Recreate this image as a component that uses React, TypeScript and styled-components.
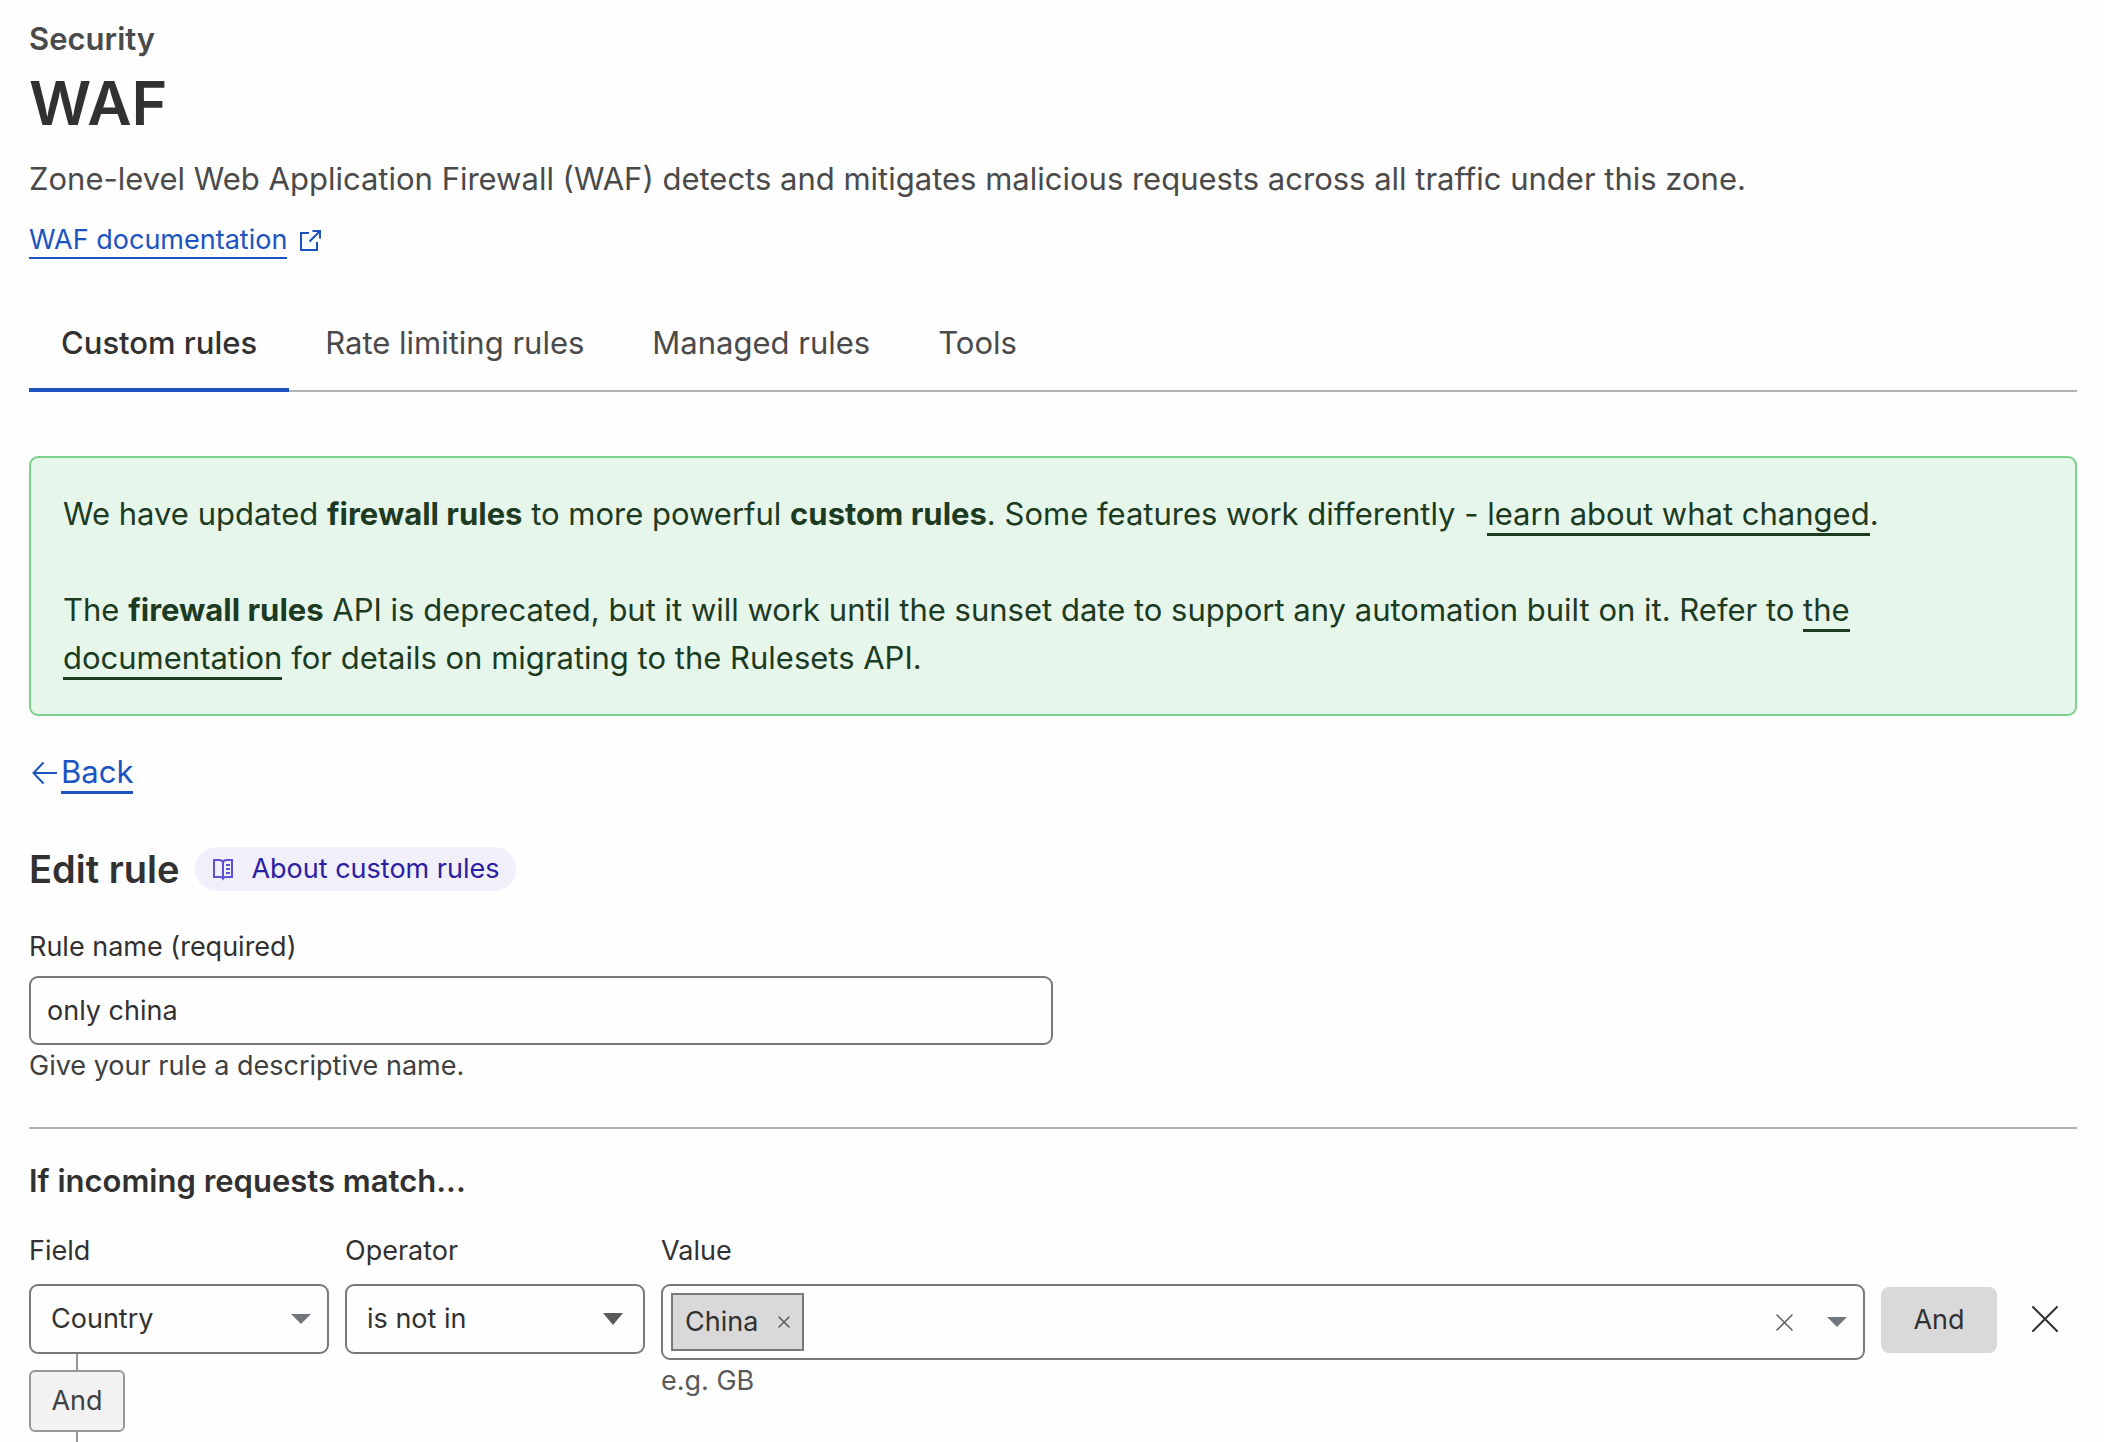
import { useState } from "react";
import styled, { createGlobalStyle, css } from "styled-components";

const color = {
  text: "#313131",
  muted: "#4a4a4a",
  faint: "#595959",
  link: "#1b53c0",
  border: "#797979",
  rule: "#b3b3b3",
  successText: "#1d3a22",
};

const GlobalStyle = createGlobalStyle`
  *, *::before, *::after { box-sizing: border-box; }
  body {
    margin: 0;
    background: #fefefe;
    color: ${color.text};
    font-family: Inter, "Liberation Sans", sans-serif;
    font-size: 27px;
    line-height: 42px;
  }
  h1, h2, h3, p { margin: 0; font-weight: 400; }
  button, input, select { font: inherit; color: inherit; }
`;

const Page = styled.main`
  padding: 15px 27px 0 29px;
`;

const Eyebrow = styled.p`
  font-size: 31px;
  line-height: 48px;
  font-weight: 600;
  color: ${color.muted};
`;

const Title = styled.h1`
  font-size: 61px;
  line-height: 80px;
  font-weight: 600;
`;

const Lead = styled.p`
  margin-top: 12px;
  font-size: 31px;
  line-height: 48px;
  color: ${color.muted};
`;

const DocLine = styled.p`
  margin-top: 16px;
  display: flex;
  align-items: center;
  gap: 12px;
  color: ${color.link};
`;

const Link = styled.a<{ $thick?: boolean }>`
  color: inherit;
  text-decoration: none;
  padding-bottom: 1px;
  border-bottom: ${(p) => (p.$thick ? 3 : 2)}px solid currentColor;
`;

const Tabs = styled.nav`
  margin-top: 34px;
  display: flex;
  gap: 4px;
  box-shadow: inset 0 -2px 0 ${color.rule};
`;

const Tab = styled.a<{ $active?: boolean }>`
  padding: 24px 32px 21px;
  font-size: 31px;
  line-height: 48px;
  text-decoration: none;
  color: ${color.muted};
  border-bottom: 4px solid transparent;
  ${(p) =>
    p.$active &&
    css`
      color: ${color.text};
      font-weight: 500;
      border-bottom-color: ${color.link};
    `}
`;

const Notice = styled.section`
  margin-top: 64px;
  padding: 32px;
  display: grid;
  gap: 48px;
  border: 2px solid #7bd08e;
  border-radius: 9px;
  background: #e6f6ea;
  color: ${color.successText};
  font-size: 31px;
  line-height: 48px;

  strong { font-weight: 700; }
`;

const BackLine = styled.p`
  margin-top: 32px;
  display: flex;
  align-items: center;
  color: ${color.link};
  font-size: 31px;
  line-height: 48px;
`;

const HeadingRow = styled.div`
  margin-top: 48px;
  display: flex;
  align-items: center;
  gap: 16px;
`;

const SectionTitle = styled.h2`
  font-size: 38px;
  line-height: 50px;
  font-weight: 600;
`;

const Pill = styled.a`
  height: 44px;
  padding: 0 16px;
  display: flex;
  align-items: center;
  gap: 16px;
  border-radius: 22px;
  background: #f1effa;
  color: #2c20a2;
  text-decoration: none;

  svg { color: #5c50d6; }
`;

const Label = styled.label`
  display: block;
`;

const Hint = styled.p<{ $faint?: boolean }>`
  color: ${(p) => (p.$faint ? color.faint : "#404040")};
`;

const NameField = styled.div`
  margin-top: 32px;
  width: 50%;
`;

const boxed = css`
  border: 2px solid ${color.border};
  border-radius: 9px;
  background: #fefefe;
`;

const TextInput = styled.input`
  ${boxed}
  display: block;
  width: 100%;
  height: 69px;
  margin-top: 8px;
  padding: 0 16px;
`;

const Divider = styled.hr`
  margin: 40px 0 28px;
  border: 0;
  border-top: 2px solid ${color.rule};
`;

const SubTitle = styled.h3`
  font-size: 31px;
  line-height: 48px;
  font-weight: 600;
`;

const Condition = styled.div`
  margin-top: 25px;
  display: grid;
  grid-template-columns: 300px 300px minmax(0, 1fr) auto auto;
  gap: 16px;
  align-items: start;
`;

const SelectShell = styled.div<{ $caretInset: number }>`
  margin-top: 12px;
  display: grid;
  align-items: center;

  > * { grid-area: 1 / 1; }
  svg { justify-self: end; margin-right: ${(p) => p.$caretInset}px; pointer-events: none; }
`;

const Select = styled.select`
  ${boxed}
  appearance: none;
  width: 100%;
  height: 70px;
  padding: 0 48px 0 20px;
`;

const Branch = styled.div`
  width: fit-content;
  display: flex;
  flex-direction: column;
  align-items: center;
`;

const Connector = styled.span<{ $length: number }>`
  width: 2px;
  height: ${(p) => p.$length}px;
  background: #979797;
`;

const BranchButton = styled.button`
  width: 96px;
  height: 62px;
  padding: 0;
  border: 2px solid #979797;
  border-radius: 6px;
  background: #f2f2f2;
  color: #404040;
`;

const Combo = styled.div`
  ${boxed}
  margin-top: 12px;
  height: 76px;
  padding: 0 16px 0 8px;
  display: flex;
  align-items: center;
`;

const Chip = styled.span`
  height: 58px;
  padding: 0 12px;
  display: flex;
  align-items: center;
  gap: 20px;
  border: 2px solid ${color.border};
  background: #d9d9d9;
`;

const ComboInput = styled.input`
  flex: 1;
  min-width: 0;
  padding: 0 8px;
  border: 0;
  outline: 0;
  background: transparent;
`;

const IconButton = styled.button`
  padding: 0;
  border: 0;
  background: transparent;
  display: flex;
  align-items: center;
  justify-content: center;
`;

const ComboActions = styled.div`
  display: flex;
  gap: 34px;
`;

const AndButton = styled.button`
  width: 116px;
  height: 66px;
  margin-top: 57px;
  padding: 0;
  border: 0;
  border-radius: 8px;
  background: #d9d9d9;
`;

const RemoveButton = styled(IconButton)`
  width: 64px;
  height: 64px;
  margin-top: 57px;
`;

const ExternalIcon = () => (
  <svg width="22" height="22" viewBox="0 0 22 22" fill="none" stroke="currentColor" strokeWidth="2" aria-hidden="true">
    <path d="M10 4H2v17h16v-8M13.5 2H21v7.5M21 2 10.5 12.5" />
  </svg>
);

const ArrowLeftIcon = () => (
  <svg width="32" height="26" viewBox="0 0 32 26" fill="none" stroke="currentColor" strokeWidth="2" aria-hidden="true">
    <path d="M28 14H5M14.5 3.5 4.5 14l10 10.5" />
  </svg>
);

const BookIcon = () => (
  <svg width="24" height="24" viewBox="0 0 24 24" fill="none" stroke="currentColor" strokeWidth="2" aria-hidden="true">
    <path d="M12 5c-.8-1.300-1.800-2-3.500-2H3v17h6.500c1.500 0 2 .5 2.500 1.500.5-1 1-1.500 2.500-1.500H21V3h-5.500C13.800 3 12.800 3.700 12 5zM12 5v16" />
    <path d="M15 8h4M15 12h4M15 16h4" />
  </svg>
);

const Caret = ({ height = 10, fill = "#72767d" }: { height?: number; fill?: string }) => (
  <svg width="20" height={height} viewBox="0 0 20 10" preserveAspectRatio="none" aria-hidden="true">
    <path d="M0 0h20L10 10z" fill={fill} />
  </svg>
);

const Cross = ({ size, stroke = "#595959", weight = 1.5 }: { size: number; stroke?: string; weight?: number }) => (
  <svg width={size} height={size} viewBox={`0 0 ${size} ${size}`} fill="none" stroke={stroke} strokeWidth={weight} aria-hidden="true">
    <path d={`M1 1 ${size - 1} ${size - 1}M${size - 1} 1 1 ${size - 1}`} strokeLinecap="round" />
  </svg>
);

const tabs = ["Custom rules", "Rate limiting rules", "Managed rules", "Tools"];

export default function App() {
  const [name, setName] = useState("only china");
  const [query, setQuery] = useState("");

  return (
    <>
      <GlobalStyle />
      <Page>
        <Eyebrow>Security</Eyebrow>
        <Title>WAF</Title>
        <Lead>
          Zone-level Web Application Firewall (WAF) detects and mitigates malicious requests across all traffic under
          this zone.
        </Lead>
        <DocLine>
          <span>
            <Link href="#docs">WAF documentation</Link>
          </span>
          <ExternalIcon />
        </DocLine>

        <Tabs aria-label="WAF sections">
          {tabs.map((tab, i) => (
            <Tab key={tab} href="#" $active={i === 0} aria-current={i === 0 ? "page" : undefined}>
              {tab}
            </Tab>
          ))}
        </Tabs>

        <Notice>
          <p>
            We have updated <strong>firewall rules</strong> to more powerful <strong>custom rules</strong>. Some
            features work differently - <Link $thick href="#changes">learn about what changed</Link>.
          </p>
          <p>
            The <strong>firewall rules</strong> API is deprecated, but it will work until the sunset date to support any
            automation built on it. Refer to <Link $thick href="#migration">the documentation</Link> for details on
            migrating to the Rulesets API.
          </p>
        </Notice>

        <BackLine>
          <ArrowLeftIcon />
          <span>
            <Link $thick href="#back">Back</Link>
          </span>
        </BackLine>

        <HeadingRow>
          <SectionTitle>Edit rule</SectionTitle>
          <Pill href="#about">
            <BookIcon />
            About custom rules
          </Pill>
        </HeadingRow>

        <NameField>
          <Label htmlFor="rule-name">Rule name (required)</Label>
          <TextInput id="rule-name" value={name} onChange={(e) => setName(e.target.value)} />
          <Hint>Give your rule a descriptive name.</Hint>
        </NameField>

        <Divider />

        <SubTitle>If incoming requests match...</SubTitle>
        <Condition>
          <div>
            <Label htmlFor="field">Field</Label>
            <SelectShell $caretInset={18}>
              <Select id="field" defaultValue="Country">
                <option>Country</option>
              </Select>
              <Caret />
            </SelectShell>
            <Branch>
              <Connector $length={16} />
              <BranchButton type="button">And</BranchButton>
              <Connector $length={10} />
            </Branch>
          </div>
          <div>
            <Label htmlFor="operator">Operator</Label>
            <SelectShell $caretInset={22}>
              <Select id="operator" defaultValue="is not in">
                <option>is not in</option>
              </Select>
              <Caret height={12} fill={color.faint} />
            </SelectShell>
          </div>
          <div>
            <Label htmlFor="value">Value</Label>
            <Combo>
              <Chip>
                China
                <IconButton type="button" aria-label="Remove China">
                  <Cross size={12} />
                </IconButton>
              </Chip>
              <ComboInput id="value" value={query} onChange={(e) => setQuery(e.target.value)} />
              <ComboActions>
                <IconButton type="button" aria-label="Clear values">
                  <Cross size={17} />
                </IconButton>
                <IconButton type="button" aria-label="Show options">
                  <Caret />
                </IconButton>
              </ComboActions>
            </Combo>
            <Hint $faint>e.g. GB</Hint>
          </div>
          <AndButton type="button">And</AndButton>
          <RemoveButton type="button" aria-label="Remove condition">
            <Cross size={26} stroke={color.text} weight={2} />
          </RemoveButton>
        </Condition>
      </Page>
    </>
  );
}
